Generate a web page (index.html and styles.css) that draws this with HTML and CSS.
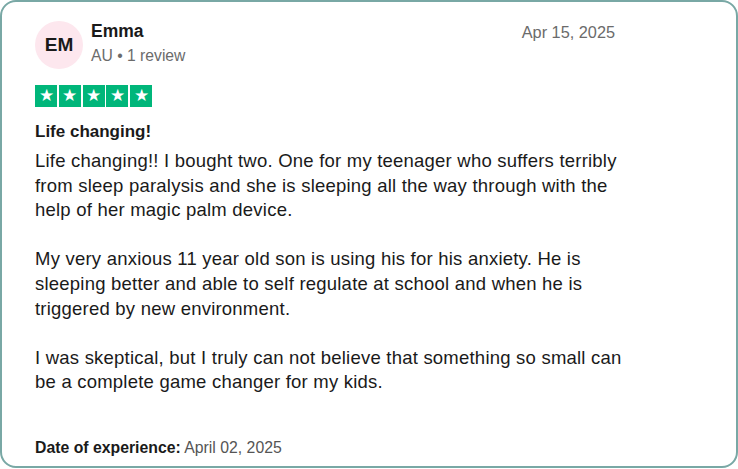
FILE: index.html
```html
<!DOCTYPE html>
<html lang="en">
<head>
    <meta charset="UTF-8">
    <meta name="viewport" content="width=device-width, initial-scale=1.0">
    <title>Review - Emma</title>
    <link rel="stylesheet" href="styles.css">
</head>
<body>

    <div class="card">
        <div class="header">
            <div class="user">
                <div class="avatar">EM</div>
                <div class="info">
                    <div class="name">Emma</div>
                    <div class="meta">AU &bull; 1 review</div>
                </div>
            </div>
            <div class="date">Apr 15, 2025</div>
        </div>

        <div class="stars">
            <span class="star">&#9733;</span>
            <span class="star">&#9733;</span>
            <span class="star">&#9733;</span>
            <span class="star">&#9733;</span>
            <span class="star">&#9733;</span>
        </div>

        <h2 class="title">Life changing!</h2>

        <div class="body">
            <p>Life changing!! I bought two. One for my teenager who suffers terribly from sleep paralysis and she is sleeping all the way through with the help of her magic palm device.</p>
            <p>My very anxious 11 year old son is using his for his anxiety. He is sleeping better and able to self regulate at school and when he is triggered by new environment.</p>
            <p>I was skeptical, but I truly can not believe that something so small can be a complete game changer for my kids.</p>
        </div>

        <div class="experience"><b>Date of experience:</b> April 02, 2025</div>
    </div>

</body>
</html>
```

FILE: styles.css
```css
        body {
            margin: 0;
            font-family: "Liberation Sans", Arial, sans-serif;
            background-color: #ffffff;
            color: #1a1a1a;
        }
        .card {
            box-sizing: border-box;
            width: 738px;
            height: 468px;
            border: 2px solid #79a8a5;
            border-radius: 16px;
            padding: 17px 33px 0 33px;
            display: flex;
            flex-direction: column;
        }
        .header {
            display: flex;
            justify-content: space-between;
            align-items: flex-start;
            padding-right: 88px;
        }
        .user {
            display: flex;
            gap: 8px;
        }
        .avatar {
            width: 48px;
            height: 48px;
            border-radius: 50%;
            background-color: #fde7ee;
            display: flex;
            align-items: center;
            justify-content: center;
            font-weight: bold;
            font-size: 19px;
            margin-top: 2px;
        }
        .name {
            font-weight: bold;
            font-size: 17.5px;
            line-height: 24px;
        }
        .meta {
            color: #6b6b6b;
            font-size: 15.7px;
            line-height: 24px;
            margin-top: 1px;
        }
        .date {
            color: #6b6b6b;
            font-size: 16.3px;
            line-height: 24px;
            margin-top: 1px;
        }
        .stars {
            display: flex;
            gap: 1.75px;
            margin-top: 16px;
        }
        .star {
            width: 22px;
            height: 22px;
            background-color: #00b67a;
            color: #ffffff;
            font-size: 17px;
            line-height: 22px;
            text-align: center;
        }
        .title {
            font-size: 17px;
            font-weight: bold;
            margin: 14px 0 0 0;
            line-height: 22px;
        }
        .body {
            font-size: 18.5px;
            letter-spacing: 0.22px;
            line-height: 24.6px;
            margin-top: 6px;
            width: 594px;
        }
        .body p {
            margin: 0 0 24.6px 0;
        }
        .experience {
            margin-top: auto;
            margin-bottom: 7px;
            font-size: 15.8px;
            line-height: 22px;
            color: #555555;
        }
        .experience b {
            color: #1a1a1a;
        }
```
